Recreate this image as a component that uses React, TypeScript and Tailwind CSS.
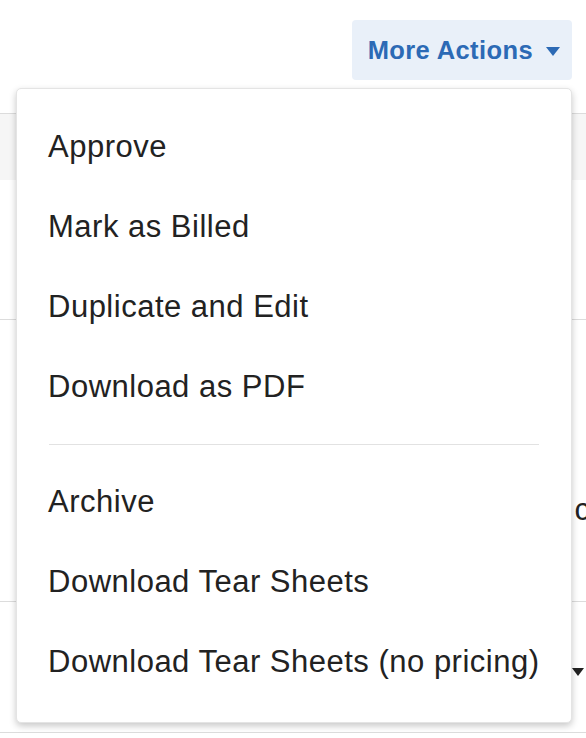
const firstGroup = ['Approve', 'Mark as Billed', 'Duplicate and Edit', 'Download as PDF']
const secondGroup = ['Archive', 'Download Tear Sheets', 'Download Tear Sheets (no pricing)']

const MenuItem = ({ label }: { label: string }) => (
  <div className="flex h-[80px] items-center px-[31px] text-[31px] tracking-[0.5px] text-[#222222] whitespace-nowrap">
    {label}
  </div>
)

export default function App() {
  return (
    <div className="relative h-[738px] w-[586px] overflow-hidden bg-white font-['Liberation_Sans',Arial,sans-serif]">
      {/* header */}
      <div className="flex h-[114px] justify-end border-b border-[#dcdcdc] pt-[20px] pr-[14px]">
        <button className="flex h-[60px] items-center gap-[13px] rounded-[4px] bg-[#e9f0f9] pl-[16px] pr-[12px] text-[25.5px] font-bold tracking-[0.4px] text-[#2c6ab5]">
          More Actions
          <svg width="14" height="9" viewBox="0 0 14 9" className="mt-[2px]">
            <path d="M0 0h14L7 9z" fill="#2c6ab5" />
          </svg>
        </button>
      </div>

      {/* table behind */}
      <div className="h-[66px] bg-[#f6f6f6]" />
      <div className="h-[140px] border-b border-[#dcdcdc]" />
      <div className="flex h-[282px] items-center justify-end border-b border-[#dcdcdc] pt-[100px]">
        <span className="mr-[-4px] text-[31px] text-[#222]">c</span>
      </div>
      <div className="flex h-[131px] items-center justify-end border-b border-[#dcdcdc] pt-[10px] pr-[2px]">
        <svg width="12" height="8" viewBox="0 0 12 8">
          <path d="M0 0h12L6 8z" fill="#222" />
        </svg>
      </div>

      {/* dropdown menu */}
      <div className="absolute left-[16px] top-[88px] w-[556px] rounded-[5px] border border-[#e4e4e4] bg-white pt-[18px] pb-[20px] shadow-[0_3px_7px_rgba(0,0,0,0.22)]">
        {firstGroup.map((l) => (
          <MenuItem key={l} label={l} />
        ))}
        <div className="mx-[32px] my-[17px] h-px bg-[#e2e2e2]" />
        {secondGroup.map((l) => (
          <MenuItem key={l} label={l} />
        ))}
      </div>
    </div>
  )
}
